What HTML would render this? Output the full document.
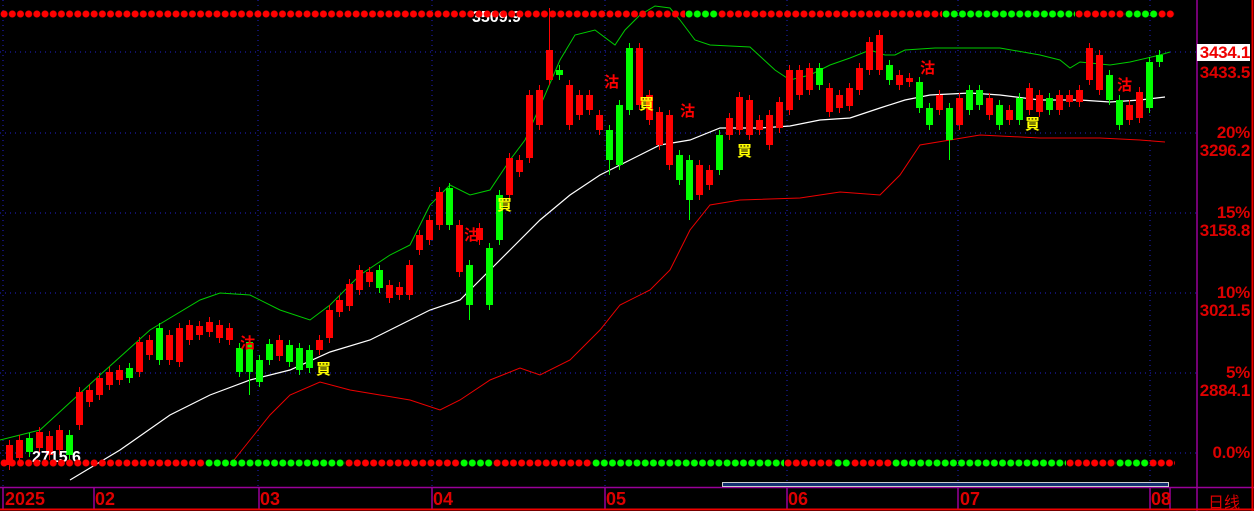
<!DOCTYPE html>
<html><head><meta charset="utf-8"><style>
html,body{margin:0;padding:0;background:#000;width:1254px;height:511px;overflow:hidden;position:relative;font-family:"Liberation Sans","Noto Sans CJK SC",sans-serif}
.d{position:absolute;height:8px;background-size:8.2px 8px;background-repeat:repeat-x}
.r{background-image:radial-gradient(circle at 4.1px 4px,#f00 3.2px,transparent 3.8px)}
.g{background-image:radial-gradient(circle at 4.1px 4px,#0f0 3.2px,transparent 3.8px)}
.ax{position:absolute;right:4px;color:#d00;font-weight:bold;font-size:17px;line-height:17px;text-align:right;letter-spacing:-0.3px}
.m{position:absolute;top:489px;color:#d00;font-weight:bold;font-size:18px}
.t{position:absolute;font-weight:bold;font-size:15px;font-family:"Noto Sans CJK SC",sans-serif;line-height:15px}
</style></head><body>
<svg width="1254" height="511" style="position:absolute;left:0;top:0">
<g stroke="#22c" stroke-width="1" stroke-dasharray="1 4">
<path d="M3 0V487M258 0V487M432 0V487M605 0V487M787 0V487M958 0V487M1150 0V487"/>
<path d="M0 133H1197M0 213H1197M0 293H1197M0 373H1197M0 453H1197M0 52H1197"/>
</g>
<polyline fill="none" stroke="#0c0" stroke-width="1" points="0,440 40,430 100,375 150,330 200,300 220,293 250,295 280,310 310,320 330,305 360,275 390,255 410,245 430,205 450,185 470,195 490,190 510,160 525,140 545,95 560,60 575,35 595,30 615,45 625,30 640,15 655,6 670,8 680,20 695,40 710,45 750,47 775,70 790,80 810,75 830,65 850,58 870,50 885,55 895,55 905,50 935,48 1000,48 1040,55 1060,60 1070,68 1080,62 1110,65 1130,62 1160,55 1170,52"/>
<polyline fill="none" stroke="#fff" stroke-width="1.2" points="70,480 120,450 170,415 210,395 250,380 290,370 330,352 370,340 400,325 430,310 460,300 490,270 510,250 540,220 570,195 600,175 630,160 660,145 690,140 720,128 760,128 790,126 820,120 850,118 880,108 905,100 930,95 970,93 1000,95 1040,100 1080,100 1110,102 1140,100 1165,97"/>
<polyline fill="none" stroke="#e00" stroke-width="1" points="230,465 250,440 270,415 290,395 320,382 350,390 380,395 410,400 440,410 460,400 490,380 520,368 540,375 570,360 600,330 620,305 650,290 670,270 690,230 710,205 740,200 800,198 820,195 840,192 880,195 900,175 920,145 950,140 980,135 1040,138 1100,138 1140,140 1165,142"/>
<path stroke="#f00" stroke-width="1" fill="none" d="M9.5 440V470M19.5 435V463M39.5 427V453M49.5 431V460M59.5 425V455M79.5 387V430M89.5 385V407M99.5 373V400M109.5 367V390M119.5 365V385M139.5 337V377M149.5 335V360M169.5 330V365M179.5 323V367M189.5 320V345M199.5 321V340M209.5 317V337M219.5 320V343M229.5 323V345M279.5 335V361M319.5 335V355M329.5 305V343M339.5 295V317M349.5 279V311M359.5 265V295M369.5 267V287M389.5 280V303M399.5 282V300M409.5 260V300M419.5 230V255M429.5 215V245M439.5 187V230M459.5 220V277M479.5 223V245M509.5 153V200M519.5 155V177M529.5 90V163M539.5 85V130M549.5 8V85M569.5 80V130M579.5 90V120M589.5 90V115M599.5 110V135M639.5 43V110M649.5 90V125M659.5 107V150M669.5 110V170M699.5 160V200M709.5 165V190M729.5 113V140M739.5 92V135M749.5 95V140M759.5 115V135M769.5 110V150M779.5 97V133M789.5 65V115M799.5 65V100M809.5 63V95M829.5 83V117M839.5 90V113M849.5 83V111M859.5 63V95M869.5 37V75M879.5 30V75M899.5 70V90M909.5 73V87M939.5 90V115M959.5 93V130M989.5 93V120M1009.5 105V125M1029.5 83V115M1039.5 90V117M1059.5 90V115M1069.5 90V107M1079.5 85V107M1089.5 43V85M1099.5 50V95M1129.5 100V125M1139.5 87V123"/>
<path stroke="#0f0" stroke-width="1" fill="none" d="M29.5 433V457M69.5 430V460M129.5 363V383M159.5 323V365M239.5 343V377M249.5 337V395M259.5 355V387M269.5 339V365M289.5 340V367M299.5 343V375M309.5 345V373M379.5 265V293M449.5 183V230M469.5 260V320M489.5 243V310M499.5 190V245M559.5 65V80M609.5 125V175M619.5 100V170M629.5 43V115M679.5 150V185M689.5 155V220M719.5 130V175M819.5 63V90M889.5 60V85M919.5 77V113M929.5 103V130M949.5 103V160M969.5 85V115M979.5 85V110M999.5 100V130M1019.5 93V125M1049.5 93V115M1109.5 70V105M1119.5 95V130M1149.5 57V113M1159.5 50V67"/>
<path fill="#f00" d="M6 445h7V465h-7zM16 440h7V458h-7zM36 432h7V448h-7zM46 436h7V455h-7zM56 430h7V450h-7zM76 392h7V425h-7zM86 390h7V402h-7zM96 378h7V395h-7zM106 372h7V385h-7zM116 370h7V380h-7zM136 342h7V372h-7zM146 340h7V355h-7zM166 335h7V360h-7zM176 328h7V362h-7zM186 325h7V340h-7zM196 326h7V335h-7zM206 322h7V332h-7zM216 325h7V338h-7zM226 328h7V340h-7zM276 340h7V356h-7zM316 340h7V350h-7zM326 310h7V338h-7zM336 300h7V312h-7zM346 284h7V306h-7zM356 270h7V290h-7zM366 272h7V282h-7zM386 285h7V298h-7zM396 287h7V295h-7zM406 265h7V295h-7zM416 235h7V250h-7zM426 220h7V240h-7zM436 192h7V225h-7zM456 225h7V272h-7zM476 228h7V240h-7zM506 158h7V195h-7zM516 160h7V172h-7zM526 95h7V158h-7zM536 90h7V125h-7zM546 50h7V80h-7zM566 85h7V125h-7zM576 95h7V115h-7zM586 95h7V110h-7zM596 115h7V130h-7zM636 48h7V105h-7zM646 95h7V120h-7zM656 112h7V145h-7zM666 115h7V165h-7zM696 165h7V195h-7zM706 170h7V185h-7zM726 118h7V135h-7zM736 97h7V130h-7zM746 100h7V135h-7zM756 120h7V130h-7zM766 115h7V145h-7zM776 102h7V128h-7zM786 70h7V110h-7zM796 70h7V95h-7zM806 68h7V90h-7zM826 88h7V112h-7zM836 95h7V108h-7zM846 88h7V106h-7zM856 68h7V90h-7zM866 42h7V70h-7zM876 35h7V70h-7zM896 75h7V85h-7zM906 78h7V82h-7zM936 95h7V110h-7zM956 98h7V125h-7zM986 98h7V115h-7zM1006 110h7V120h-7zM1026 88h7V110h-7zM1036 95h7V112h-7zM1056 95h7V110h-7zM1066 95h7V102h-7zM1076 90h7V102h-7zM1086 48h7V80h-7zM1096 55h7V90h-7zM1126 105h7V120h-7zM1136 92h7V118h-7z"/>
<path fill="#0f0" d="M26 438h7V452h-7zM66 435h7V455h-7zM126 368h7V378h-7zM156 328h7V360h-7zM236 348h7V372h-7zM246 342h7V372h-7zM256 360h7V382h-7zM266 344h7V360h-7zM286 345h7V362h-7zM296 348h7V370h-7zM306 350h7V368h-7zM376 270h7V288h-7zM446 188h7V225h-7zM466 265h7V305h-7zM486 248h7V305h-7zM496 195h7V240h-7zM556 70h7V75h-7zM606 130h7V160h-7zM616 105h7V165h-7zM626 48h7V110h-7zM676 155h7V180h-7zM686 160h7V200h-7zM716 135h7V170h-7zM816 68h7V85h-7zM886 65h7V80h-7zM916 82h7V108h-7zM926 108h7V125h-7zM946 108h7V140h-7zM966 90h7V110h-7zM976 90h7V105h-7zM996 105h7V125h-7zM1016 98h7V120h-7zM1046 98h7V110h-7zM1106 75h7V100h-7zM1116 100h7V125h-7zM1146 62h7V108h-7zM1156 55h7V62h-7z"/>
<path stroke="#909" stroke-width="1.5" fill="none" d="M1197 0V511M0 487.5H1197M1197 487.5H1254M3 487V509M94 487V509M259 487V509M432 487V509M605 487V509M787 487V509M958 487V509M1150 487V509M1170 487V509"/>
<path stroke="#e00" stroke-width="2" fill="none" d="M0 509.5H1254M1252.5 0V511"/>
<rect x="722.5" y="482.5" width="446" height="4" fill="#123070" stroke="#ccc"/>
<rect x="1197" y="44" width="53" height="17" fill="#fff"/>
</svg>
<div style="position:absolute;left:472px;top:9px;color:#fff;font-weight:bold;font-size:16px">3509.9</div>
<div style="position:absolute;left:32px;top:449px;color:#fff;font-weight:bold;font-size:16px">2715.6</div>
<div class="d r" style="left:0;top:10px;width:685px"></div>
<div class="d g" style="left:685px;top:10px;width:33px"></div>
<div class="d r" style="left:718px;top:10px;width:224px"></div>
<div class="d g" style="left:942px;top:10px;width:133px"></div>
<div class="d r" style="left:1075px;top:10px;width:50px"></div>
<div class="d g" style="left:1125px;top:10px;width:33px"></div>
<div class="d r" style="left:1158px;top:10px;width:17px"></div>
<div class="d r" style="left:0;top:459px;width:205px"></div>
<div class="d g" style="left:205px;top:459px;width:140px"></div>
<div class="d r" style="left:345px;top:459px;width:115px"></div>
<div class="d g" style="left:460px;top:459px;width:33px"></div>
<div class="d r" style="left:493px;top:459px;width:99px"></div>
<div class="d g" style="left:592px;top:459px;width:192px"></div>
<div class="d r" style="left:784px;top:459px;width:50px"></div>
<div class="d g" style="left:834px;top:459px;width:17px"></div>
<div class="d r" style="left:851px;top:459px;width:41px"></div>
<div class="d g" style="left:892px;top:459px;width:174px"></div>
<div class="d r" style="left:1066px;top:459px;width:50px"></div>
<div class="d g" style="left:1116px;top:459px;width:33px"></div>
<div class="d r" style="left:1149px;top:459px;width:26px"></div>
<div class="t" style="left:604px;top:74px;color:#f00">沽</div>
<div class="t" style="left:680px;top:103px;color:#f00">沽</div>
<div class="t" style="left:464px;top:227px;color:#f00">沽</div>
<div class="t" style="left:240px;top:335px;color:#f00">沽</div>
<div class="t" style="left:920px;top:60px;color:#f00">沽</div>
<div class="t" style="left:1117px;top:77px;color:#f00">沽</div>
<div class="t" style="left:497px;top:197px;color:#ff0">買</div>
<div class="t" style="left:639px;top:96px;color:#ff0">買</div>
<div class="t" style="left:737px;top:143px;color:#ff0">買</div>
<div class="t" style="left:316px;top:361px;color:#ff0">買</div>
<div class="t" style="left:1025px;top:116px;color:#ff0">買</div>
<div class="ax" style="top:44px;color:#e00">3434.1</div>
<div class="ax" style="top:64px">3433.5</div>
<div class="ax" style="top:124px">20%</div>
<div class="ax" style="top:142px">3296.2</div>
<div class="ax" style="top:204px">15%</div>
<div class="ax" style="top:222px">3158.8</div>
<div class="ax" style="top:284px">10%</div>
<div class="ax" style="top:302px">3021.5</div>
<div class="ax" style="top:364px">5%</div>
<div class="ax" style="top:382px">2884.1</div>
<div class="ax" style="top:444px">0.0%</div>
<div class="m" style="left:5px">2025</div>
<div class="m" style="left:95px">02</div>
<div class="m" style="left:260px">03</div>
<div class="m" style="left:433px">04</div>
<div class="m" style="left:606px">05</div>
<div class="m" style="left:788px">06</div>
<div class="m" style="left:960px">07</div>
<div class="m" style="left:1151px">08</div>
<div class="m" style="left:1208px;font-weight:normal;font-family:'Noto Sans CJK SC',sans-serif;top:489px;font-size:16px">日线</div>
</body></html>
